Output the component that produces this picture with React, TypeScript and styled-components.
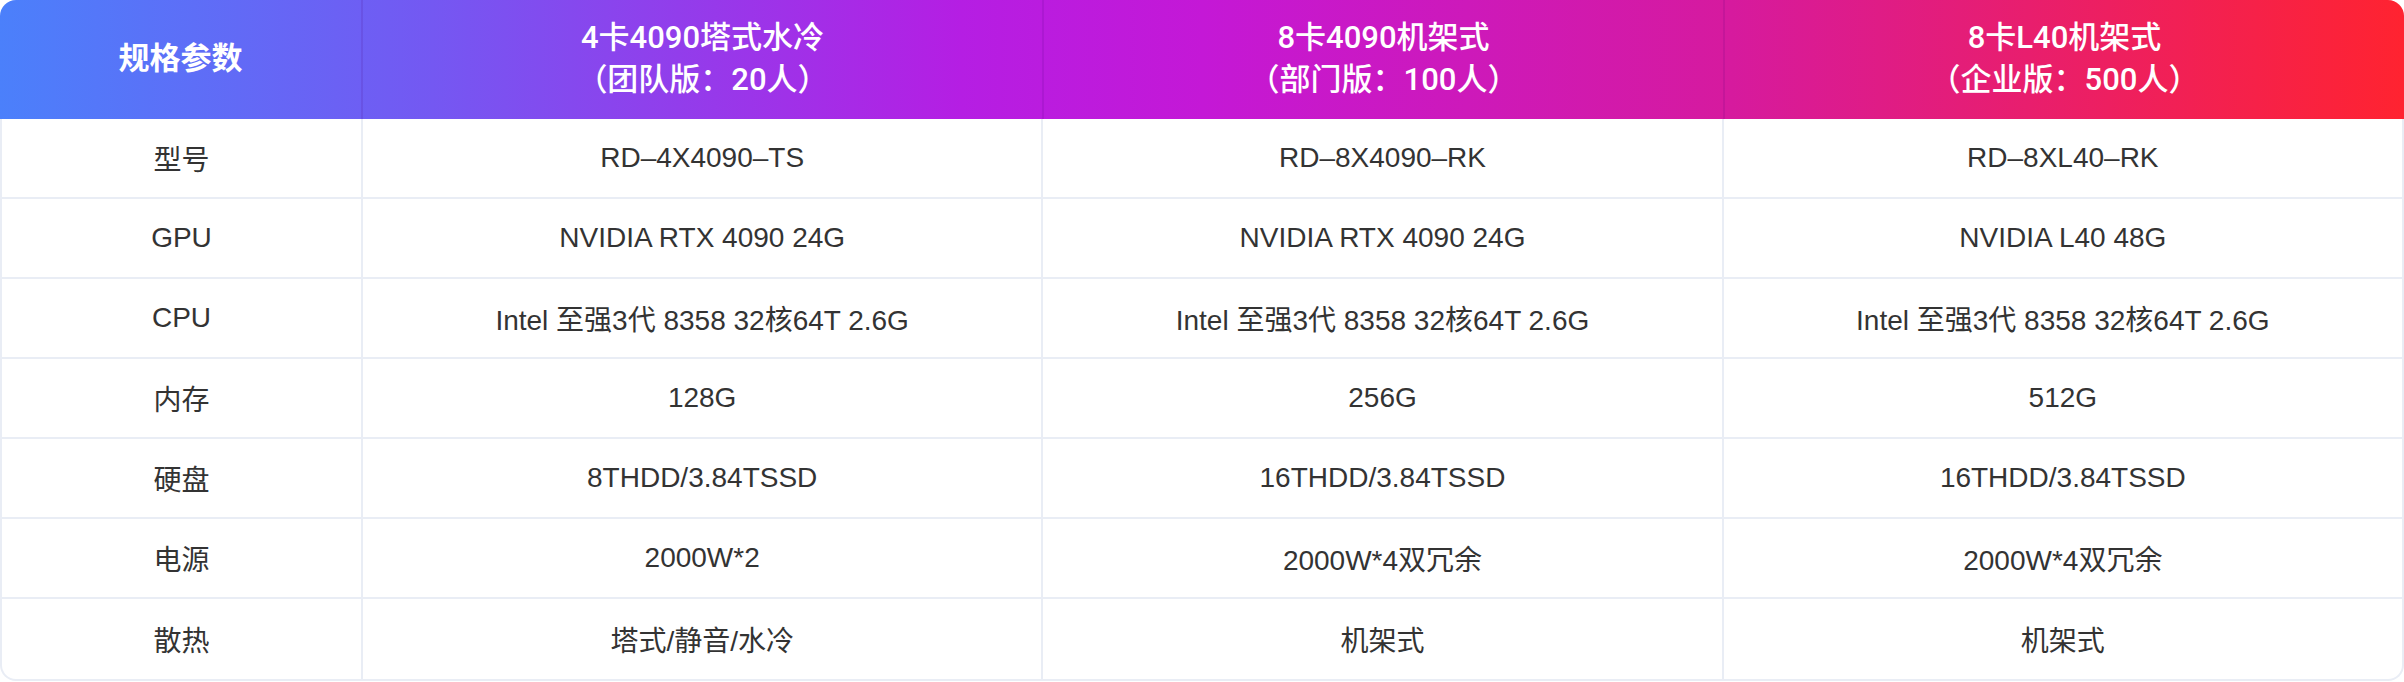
import React from "react";
import styled, { createGlobalStyle } from "styled-components";

const GlobalStyle = createGlobalStyle`
  html, body {
    margin: 0;
    padding: 0;
    background: #ffffff;
  }
  body {
    font-family: "Liberation Sans", "Noto Sans CJK SC", sans-serif;
  }
`;

const columns = [
  { title: "4卡4090塔式水冷", sub: "（团队版：20人）" },
  { title: "8卡4090机架式", sub: "（部门版：100人）" },
  { title: "8卡L40机架式", sub: "（企业版：500人）" },
];

const rows: { label: string; values: string[] }[] = [
  { label: "型号", values: ["RD–4X4090–TS", "RD–8X4090–RK", "RD–8XL40–RK"] },
  { label: "GPU", values: ["NVIDIA RTX 4090 24G", "NVIDIA RTX 4090 24G", "NVIDIA L40 48G"] },
  {
    label: "CPU",
    values: [
      "Intel 至强3代 8358 32核64T 2.6G",
      "Intel 至强3代 8358 32核64T 2.6G",
      "Intel 至强3代 8358 32核64T 2.6G",
    ],
  },
  { label: "内存", values: ["128G", "256G", "512G"] },
  { label: "硬盘", values: ["8THDD/3.84TSSD", "16THDD/3.84TSSD", "16THDD/3.84TSSD"] },
  { label: "电源", values: ["2000W*2", "2000W*4双冗余", "2000W*4双冗余"] },
  { label: "散热", values: ["塔式/静音/水冷", "机架式", "机架式"] },
];

const Table = styled.div`
  width: 2404px;
  box-sizing: border-box;
`;

const HeaderRow = styled.div`
  display: grid;
  grid-template-columns: 361px repeat(3, 1fr);
  height: 119px;
  border-radius: 16px 16px 0 0;
  background: linear-gradient(
    90deg,
    #4b80fb 0%,
    #7458f2 18%,
    #b51ee3 40%,
    #c418d6 50%,
    #d61a9e 72%,
    #ff2330 100%
  );
  overflow: hidden;
`;

const HeadCell = styled.div<{ $first?: boolean }>`
  display: flex;
  flex-direction: column;
  align-items: center;
  justify-content: center;
  color: #ffffff;
  font-family: Roboto, "Noto Sans CJK SC", sans-serif;
  font-size: 31px;
  font-weight: ${(p) => (p.$first ? 700 : 500)};
  line-height: 42px;
  border-left: ${(p) => (p.$first ? "none" : "2px solid rgba(70, 0, 120, 0.12)")};
  padding-bottom: 2px;
`;

const Body = styled.div`
  border: 2px solid #e9edf5;
  border-top: none;
  border-radius: 0 0 16px 16px;
  overflow: hidden;
`;

const Row = styled.div<{ $last?: boolean }>`
  display: grid;
  grid-template-columns: 359px repeat(3, 1fr);
  height: 80px;
  box-sizing: border-box;
  border-bottom: ${(p) => (p.$last ? "none" : "2px solid #e9edf5")};
`;

const Cell = styled.div<{ $first?: boolean }>`
  display: flex;
  align-items: center;
  justify-content: center;
  font-size: 28px;
  color: #333333;
  border-left: ${(p) => (p.$first ? "none" : "2px solid #e9edf5")};
  white-space: nowrap;
`;

export default function App() {
  return (
    <>
      <GlobalStyle />
      <Table>
        <HeaderRow>
          <HeadCell $first>规格参数</HeadCell>
          {columns.map((c) => (
            <HeadCell key={c.title}>
              <span>{c.title}</span>
              <span>{c.sub}</span>
            </HeadCell>
          ))}
        </HeaderRow>
        <Body>
          {rows.map((r, i) => (
            <Row key={r.label} $last={i === rows.length - 1}>
              <Cell $first>{r.label}</Cell>
              {r.values.map((v, j) => (
                <Cell key={j}>{v}</Cell>
              ))}
            </Row>
          ))}
        </Body>
      </Table>
    </>
  );
}
